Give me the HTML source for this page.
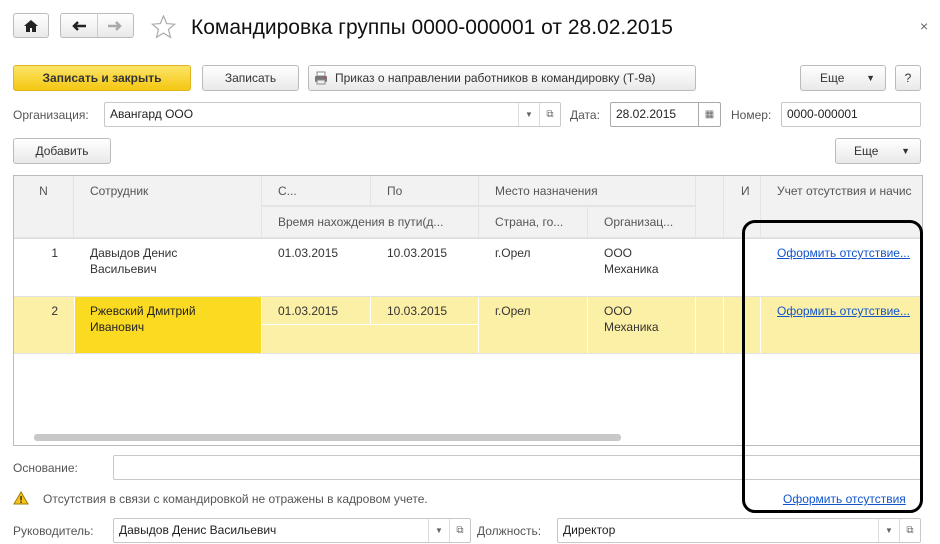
<!DOCTYPE html>
<html><head><meta charset="utf-8"><style>
*{box-sizing:border-box;margin:0;padding:0}
body{width:940px;height:544px;background:#fff;font-family:"Liberation Sans",Arial,sans-serif;font-size:12px;color:#333;position:relative;overflow:hidden}
.a{position:absolute}
.btn{position:absolute;border:1px solid #bbb;border-radius:3px;background:linear-gradient(#fff,#e9e9e9);text-align:center;line-height:25px;color:#333;font-size:12px}
.inp{position:absolute;border:1px solid #c8c8c8;border-radius:2px;background:#fff;height:25px;line-height:23px;padding-left:5px;color:#222}
.lbl{position:absolute;color:#555;line-height:14px}
.dd{position:absolute;top:0;height:23px;border-left:1px solid #ddd;text-align:center;font-size:8px;color:#666;line-height:23px}
.h{position:absolute;background:#f2f2f2;color:#555;padding:8px 0 0 0;line-height:14px}
.c{position:absolute;line-height:16px}
a{color:#1155cc;text-decoration:underline}
</style></head><body>
<div class="btn" style="left:13px;top:13px;width:36px;height:25px"><svg width="14" height="12" viewBox="0 0 14 12" style="margin-top:6px"><path d="M7 0L0 6h2v6h4V8h2v4h4V6h2z" fill="#222"/></svg></div>
<div class="btn" style="left:60px;top:13px;width:74px;height:25px"></div>
<div class="a" style="left:97px;top:14px;width:1px;height:23px;background:#ccc"></div>
<svg class="a" style="left:72px;top:20px" width="16" height="12"><path d="M2 6h12M6 2L2 6l4 4" stroke="#222" stroke-width="2.5" fill="none"/></svg>
<svg class="a" style="left:107px;top:20px" width="16" height="12"><path d="M1 6h12M9 2l4 4-4 4" stroke="#aaa" stroke-width="2.5" fill="none"/></svg>
<svg class="a" style="left:151px;top:15px" width="25" height="24" viewBox="0 0 25 24"><path d="M12.5 1l3.2 7.6 8 .6-6.2 5.2 2 8-7-4.3-7 4.3 2-8L1.3 9.2l8-.6z" fill="none" stroke="#aaa" stroke-width="1.2"/></svg>
<div class="a" style="left:191px;top:15px;font-size:21px;color:#111;line-height:26px">Командировка группы 0000-000001 от 28.02.2015</div>
<div class="a" style="left:920px;top:18px;font-size:14px;color:#666">×</div>

<div class="btn" style="left:13px;top:65px;width:178px;height:26px;background:linear-gradient(#fbe467,#f4c712);border-color:#e0b520;font-weight:bold;color:#333">Записать и закрыть</div>
<div class="btn" style="left:202px;top:65px;width:97px;height:26px">Записать</div>
<div class="btn" style="left:308px;top:65px;width:388px;height:26px;text-align:left;padding-left:26px">Приказ о направлении работников в командировку (Т-9а)</div>
<svg class="a" style="left:314px;top:71px" width="14" height="14"><rect x="3" y="1" width="8" height="4" fill="#fff" stroke="#888"/><rect x="1" y="5" width="12" height="6" rx="1" fill="#777"/><rect x="3" y="9" width="8" height="4" fill="#eee" stroke="#888"/><rect x="10" y="6" width="2" height="1" fill="#e33"/></svg>
<div class="btn" style="left:800px;top:65px;width:86px;height:26px;text-align:left;padding-left:19px">Еще<span style="position:absolute;right:10px;font-size:9px">▼</span></div>
<div class="btn" style="left:895px;top:65px;width:26px;height:26px">?</div>

<div class="lbl" style="left:13px;top:108px">Организация:</div>
<div class="inp" style="left:104px;top:102px;width:457px">Авангард ООО<div class="dd" style="left:413px;width:21px">▼</div><div class="dd" style="left:434px;width:21px;font-size:10px">⧉</div></div>
<div class="lbl" style="left:570px;top:108px">Дата:</div>
<div class="inp" style="left:610px;top:102px;width:111px;border-color:#aaa">28.02.2015<div class="dd" style="left:87px;width:22px;border-color:#aaa;font-size:10px">▦</div></div>
<div class="lbl" style="left:731px;top:108px">Номер:</div>
<div class="inp" style="left:781px;top:102px;width:140px">0000-000001</div>

<div class="btn" style="left:13px;top:138px;width:98px;height:26px">Добавить</div>
<div class="btn" style="left:835px;top:138px;width:86px;height:26px;text-align:left;padding-left:18px">Еще<span style="position:absolute;right:10px;font-size:9px">▼</span></div>

<div class="a" style="left:13px;top:175px;width:910px;height:271px;border:1px solid #bbb;overflow:hidden">
 <div class="a" style="left:0;top:0;width:910px;height:62px;background:#e4e4e4"></div>
 <div class="h" style="left:0;top:0;width:59px;height:61px;text-align:center">N</div>
 <div class="h" style="left:60px;top:0;width:187px;height:61px;padding-left:16px">Сотрудник</div>
 <div class="h" style="left:248px;top:0;width:108px;height:29px;padding-left:16px">С...</div>
 <div class="h" style="left:357px;top:0;width:107px;height:29px;padding-left:16px">По</div>
 <div class="h" style="left:248px;top:31px;width:216px;height:30px;padding-left:16px">Время нахождения в пути(д...</div>
 <div class="h" style="left:465px;top:0;width:216px;height:29px;padding-left:16px">Место назначения</div>
 <div class="h" style="left:465px;top:31px;width:108px;height:30px;padding-left:16px">Страна, го...</div>
 <div class="h" style="left:574px;top:31px;width:107px;height:30px;padding-left:16px">Организац...</div>
 <div class="h" style="left:682px;top:0;width:27px;height:61px"></div>
 <div class="h" style="left:710px;top:0;width:36px;height:61px;padding-left:17px;overflow:hidden">И</div>
 <div class="h" style="left:747px;top:0;width:170px;height:61px;padding-left:16px;white-space:nowrap">Учет отсутствия и начис</div>
 <div class="a" style="left:0;top:62px;width:910px;height:1px;background:#ddd"></div>
 <div class="c" style="left:0;top:69px;width:44px;text-align:right">1</div>
 <div class="c" style="left:76px;top:69px">Давыдов Денис<br>Васильевич</div>
 <div class="c" style="left:264px;top:69px">01.03.2015</div>
 <div class="c" style="left:373px;top:69px">10.03.2015</div>
 <div class="c" style="left:481px;top:69px">г.Орел</div>
 <div class="c" style="left:590px;top:69px">ООО<br>Механика</div>
 <div class="c" style="left:763px;top:69px"><a>Оформить отсутствие...</a></div>
 <div class="a" style="left:0;top:120px;width:910px;height:1px;background:#e2e2e2"></div>
 <div class="a" style="left:0;top:121px;width:910px;height:56px;background:#fcefa6"></div>
 <div class="a" style="left:61px;top:121px;width:186px;height:56px;background:#fadb22"></div>
 <div class="a" style="left:60px;top:121px;width:1px;height:56px;background:#fff"></div>
 <div class="a" style="left:247px;top:121px;width:1px;height:56px;background:#fff"></div>
 <div class="a" style="left:356px;top:121px;width:1px;height:27px;background:#fff"></div>
 <div class="a" style="left:248px;top:148px;width:216px;height:1px;background:#fff"></div>
 <div class="a" style="left:464px;top:121px;width:1px;height:56px;background:#fff"></div>
 <div class="a" style="left:573px;top:121px;width:1px;height:56px;background:#fff"></div>
 <div class="a" style="left:681px;top:121px;width:1px;height:56px;background:#fff"></div>
 <div class="a" style="left:709px;top:121px;width:1px;height:56px;background:#fff"></div>
 <div class="a" style="left:746px;top:121px;width:1px;height:56px;background:#fff"></div>
 <div class="c" style="left:0;top:127px;width:44px;text-align:right">2</div>
 <div class="c" style="left:76px;top:127px;color:#222">Ржевский Дмитрий<br>Иванович</div>
 <div class="c" style="left:264px;top:127px">01.03.2015</div>
 <div class="c" style="left:373px;top:127px">10.03.2015</div>
 <div class="c" style="left:481px;top:127px">г.Орел</div>
 <div class="c" style="left:590px;top:127px">ООО<br>Механика</div>
 <div class="c" style="left:763px;top:127px"><a>Оформить отсутствие...</a></div>
 <div class="a" style="left:0;top:177px;width:910px;height:1px;background:#e2e2e2"></div>
 <div class="a" style="left:20px;top:258px;width:587px;height:7px;border-radius:3px;background:#c8c8c8"></div>
</div>

<div class="lbl" style="left:13px;top:461px">Основание:</div>
<div class="inp" style="left:113px;top:455px;width:808px"></div>
<svg class="a" style="left:13px;top:491px" width="16" height="14"><path d="M8 1L15 13H1z" fill="#f5c518" stroke="#a07a00"/><rect x="7.3" y="5" width="1.5" height="4.5" fill="#333"/><rect x="7.3" y="10.5" width="1.5" height="1.5" fill="#333"/></svg>
<div class="lbl" style="left:43px;top:492px">Отсутствия в связи с командировкой не отражены в кадровом учете.</div>
<div class="a" style="left:783px;top:492px;line-height:14px"><a>Оформить отсутствия</a></div>

<div class="lbl" style="left:13px;top:524px">Руководитель:</div>
<div class="inp" style="left:113px;top:518px;width:358px">Давыдов Денис Васильевич<div class="dd" style="left:314px;width:21px">▼</div><div class="dd" style="left:335px;width:21px;font-size:10px">⧉</div></div>
<div class="lbl" style="left:477px;top:524px">Должность:</div>
<div class="inp" style="left:557px;top:518px;width:364px">Директор<div class="dd" style="left:320px;width:21px">▼</div><div class="dd" style="left:341px;width:21px;font-size:10px">⧉</div></div>

<div class="a" style="left:742px;top:220px;width:181px;height:293px;border:3px solid #000;border-radius:13px"></div>
</body></html>
